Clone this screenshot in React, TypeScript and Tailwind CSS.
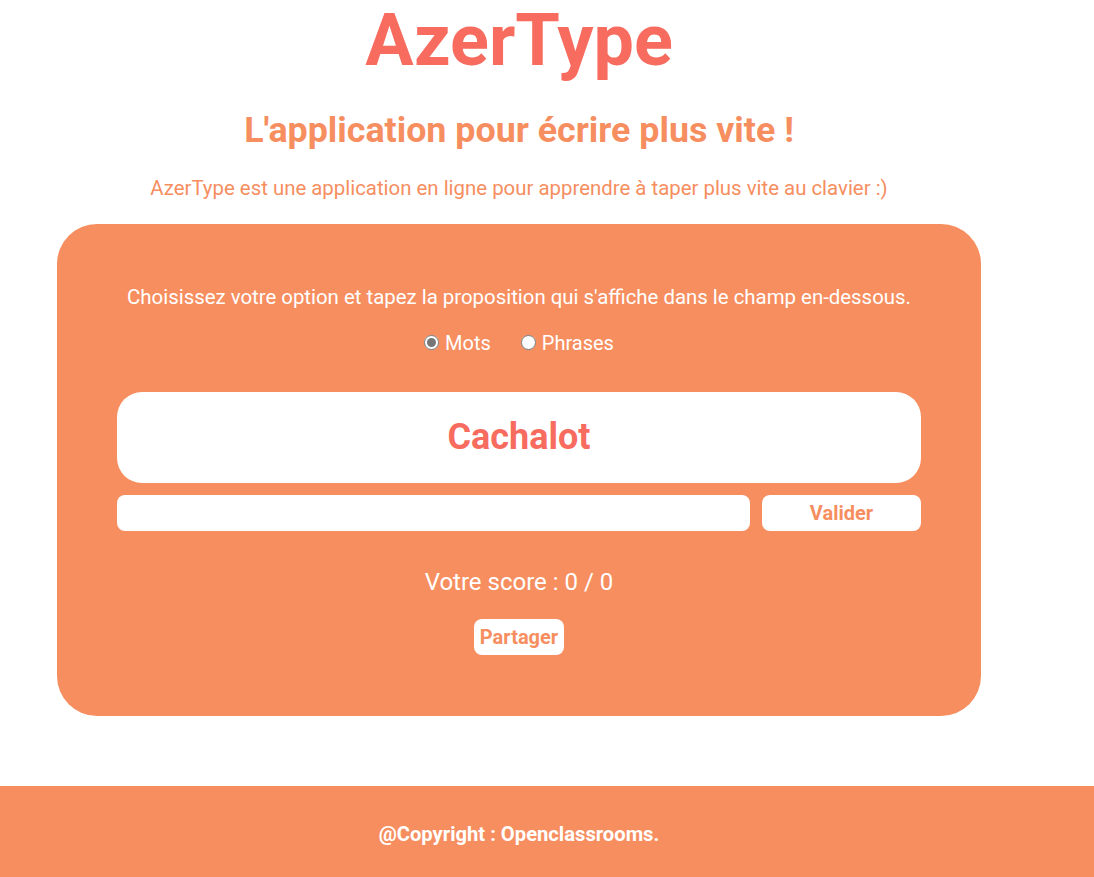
import { useState } from "react";

function App() {
    const [option, setOption] = useState<string>("mots");
    const [text, setText] = useState<string>("");

    return (
        <div className="min-h-screen bg-white font-['Roboto',sans-serif]">
            <div className="w-[1038px] flex flex-col items-center">
                <h1 className="text-[72px] leading-none font-bold text-[#f76c5f] mt-[5px]">AzerType</h1>
                <h2 className="text-[35.8px] font-bold text-[#f68e5f] mt-[36px] leading-none">
                    L'application pour écrire plus vite !
                </h2>
                <p className="text-[20.4px] leading-[30px] text-[#f68e5f] mt-[24px]">
                    AzerType est une application en ligne pour apprendre à taper plus vite au clavier :)
                </p>
                <section className="mt-[21px] w-[924px] h-[492px] bg-[#f68e5f] rounded-[40px] px-[60px] pt-[58px] flex flex-col items-center text-white">
                    <p className="text-[20.4px] leading-[30px]">
                        Choisissez votre option et tapez la proposition qui s'affiche dans le champ en-dessous.
                    </p>
                    <div className="mt-[16px] flex items-center gap-[30px] text-[20px] leading-[30px]">
                        <label className="flex items-center gap-[6px]">
                            <input
                                type="radio"
                                name="option"
                                checked={option === "mots"}
                                onChange={() => setOption("mots")}
                                className="m-0 w-[15px] h-[15px] accent-[#767676]"
                            />
                            Mots
                        </label>
                        <label className="flex items-center gap-[6px]">
                            <input
                                type="radio"
                                name="option"
                                checked={option === "phrases"}
                                onChange={() => setOption("phrases")}
                                className="m-0 w-[15px] h-[15px] accent-[#767676]"
                            />
                            Phrases
                        </label>
                    </div>
                    <div className="mt-[34px] w-full h-[91px] bg-white rounded-[25px] flex items-center justify-center">
                        <span className="text-[36px] font-bold text-[#f76c5f]">Cachalot</span>
                    </div>
                    <div className="mt-[12px] w-full flex gap-[12px]">
                        <input
                            type="text"
                            value={text}
                            onChange={(e) => setText(e.target.value)}
                            className="flex-1 h-[36px] bg-white rounded-[8px] outline-none px-2 text-black"
                        />
                        <button className="w-[159px] h-[36px] bg-white rounded-[8px] text-[20px] font-bold text-[#f68e5f]">
                            Valider
                        </button>
                    </div>
                    <p className="mt-[33px] text-[24px] leading-[36px]">Votre score : 0 / 0</p>
                    <button className="mt-[19px] h-[36px] px-[6px] bg-white rounded-[8px] text-[20px] font-bold text-[#f68e5f]">
                        Partager
                    </button>
                </section>
            </div>
            <footer className="mt-[70px] h-[91px] bg-[#f68e5f] flex items-center pt-[5px]">
                <p className="w-[1038px] text-center text-[20.2px] font-bold text-white">@Copyright : Openclassrooms.</p>
            </footer>
        </div>
    );
}

export default App;
